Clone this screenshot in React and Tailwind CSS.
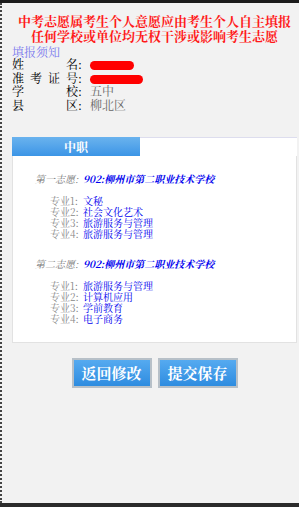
const serif = { fontFamily: '"Noto Serif CJK SC", "Noto Sans CJK SC", serif' };

function Row({ chars, children }) {
  return (
    <div className="flex items-center h-[13.5px] leading-[13.5px]">
      <div className="w-[66px] flex justify-between text-black">
        {chars.map((c) => (
          <span key={c}>{c}</span>
        ))}
      </div>
      <span className="w-[12px] text-black">:</span>
      <span className="text-[#666]">{children}</span>
    </div>
  );
}

function Redact({ w }) {
  return <span className={`inline-block h-[9px] ${w} rounded-full bg-[#ff0000] align-middle`} />;
}

function Choice({ label, school, majors }) {
  return (
    <div>
      <div className="flex h-[11px] leading-[11px] items-center italic">
        <span className="w-[48px] text-[#777]">{label}:</span>
        <span className="font-bold text-[#0000ee]">{school}</span>
      </div>
      <div className="mt-[11px]">
        {majors.map((m, i) => (
          <div key={i} className="flex h-[11px] leading-[11px] items-center">
            <span className="w-[33px] pl-[15px] box-content text-[#888] whitespace-nowrap">专业{i + 1}:</span>
            <span className="text-[#0000ee]">{m}</span>
          </div>
        ))}
      </div>
    </div>
  );
}

export default function App() {
  return (
    <div className="w-[299px] h-[507px] bg-[#f2f2f2] flex flex-col overflow-hidden" style={serif}>
      <div className="h-[3px] bg-[#1c1c1c]" />
      <div className="flex-1 border-l-2 border-dotted border-[#444] pl-[10px] pr-[2px]">
        <div className="mt-[10px] text-center text-[13px] leading-[15px] font-bold text-[#ff1a1a]">
          <div className="whitespace-nowrap">中考志愿属考生个人意愿应由考生个人自主填报</div>
          <div className="whitespace-nowrap">任何学校或单位均无权干涉或影响考生志愿</div>
        </div>

        <div className="mt-[3px] text-[12px] h-[11px] leading-[11px] text-[#7a7aee]">填报须知</div>
        <div className="text-[12px]">
          <Row chars={['姓', '名']}>
            <Redact w="w-[44px]" />
          </Row>
          <Row chars={['准', '考', '证', '号']}>
            <Redact w="w-[53px]" />
          </Row>
          <Row chars={['学', '校']}>五中</Row>
          <Row chars={['县', '区']}>柳北区</Row>
        </div>

        <div className="mt-[26px]">
          <div className="flex h-[19px]">
            <div className="w-[128px] bg-gradient-to-b from-[#6ab3ee] to-[#3b95e6] text-white font-bold text-[12px] flex items-center justify-center">
              中职
            </div>
            <div className="flex-1 bg-white border-t border-[#dde]" />
          </div>
          <div className="bg-white border border-[#e2e2e2] border-t-0 pt-[17px] pb-[18px] pl-[22px] text-[10px]">
            <Choice
              label="第一志愿"
              school="902:柳州市第二职业技术学校"
              majors={['文秘', '社会文化艺术', '旅游服务与管理', '旅游服务与管理']}
            />
            <div className="mt-[19px]">
              <Choice
                label="第二志愿"
                school="902:柳州市第二职业技术学校"
                majors={['旅游服务与管理', '计算机应用', '学前教育', '电子商务']}
              />
            </div>
          </div>
        </div>

        <div className="mt-[15px] flex justify-center gap-[6px]">
          {['返回修改', '提交保存'].map((t) => (
            <button
              key={t}
              className="w-[80px] h-[30px] border-2 border-[#b7c0c8] bg-gradient-to-b from-[#55aaf0] to-[#2d8ce0] text-white font-bold text-[15px]"
            >
              {t}
            </button>
          ))}
        </div>
      </div>
      <div className="h-[4px] bg-[#2b2b2b]" />
    </div>
  );
}
